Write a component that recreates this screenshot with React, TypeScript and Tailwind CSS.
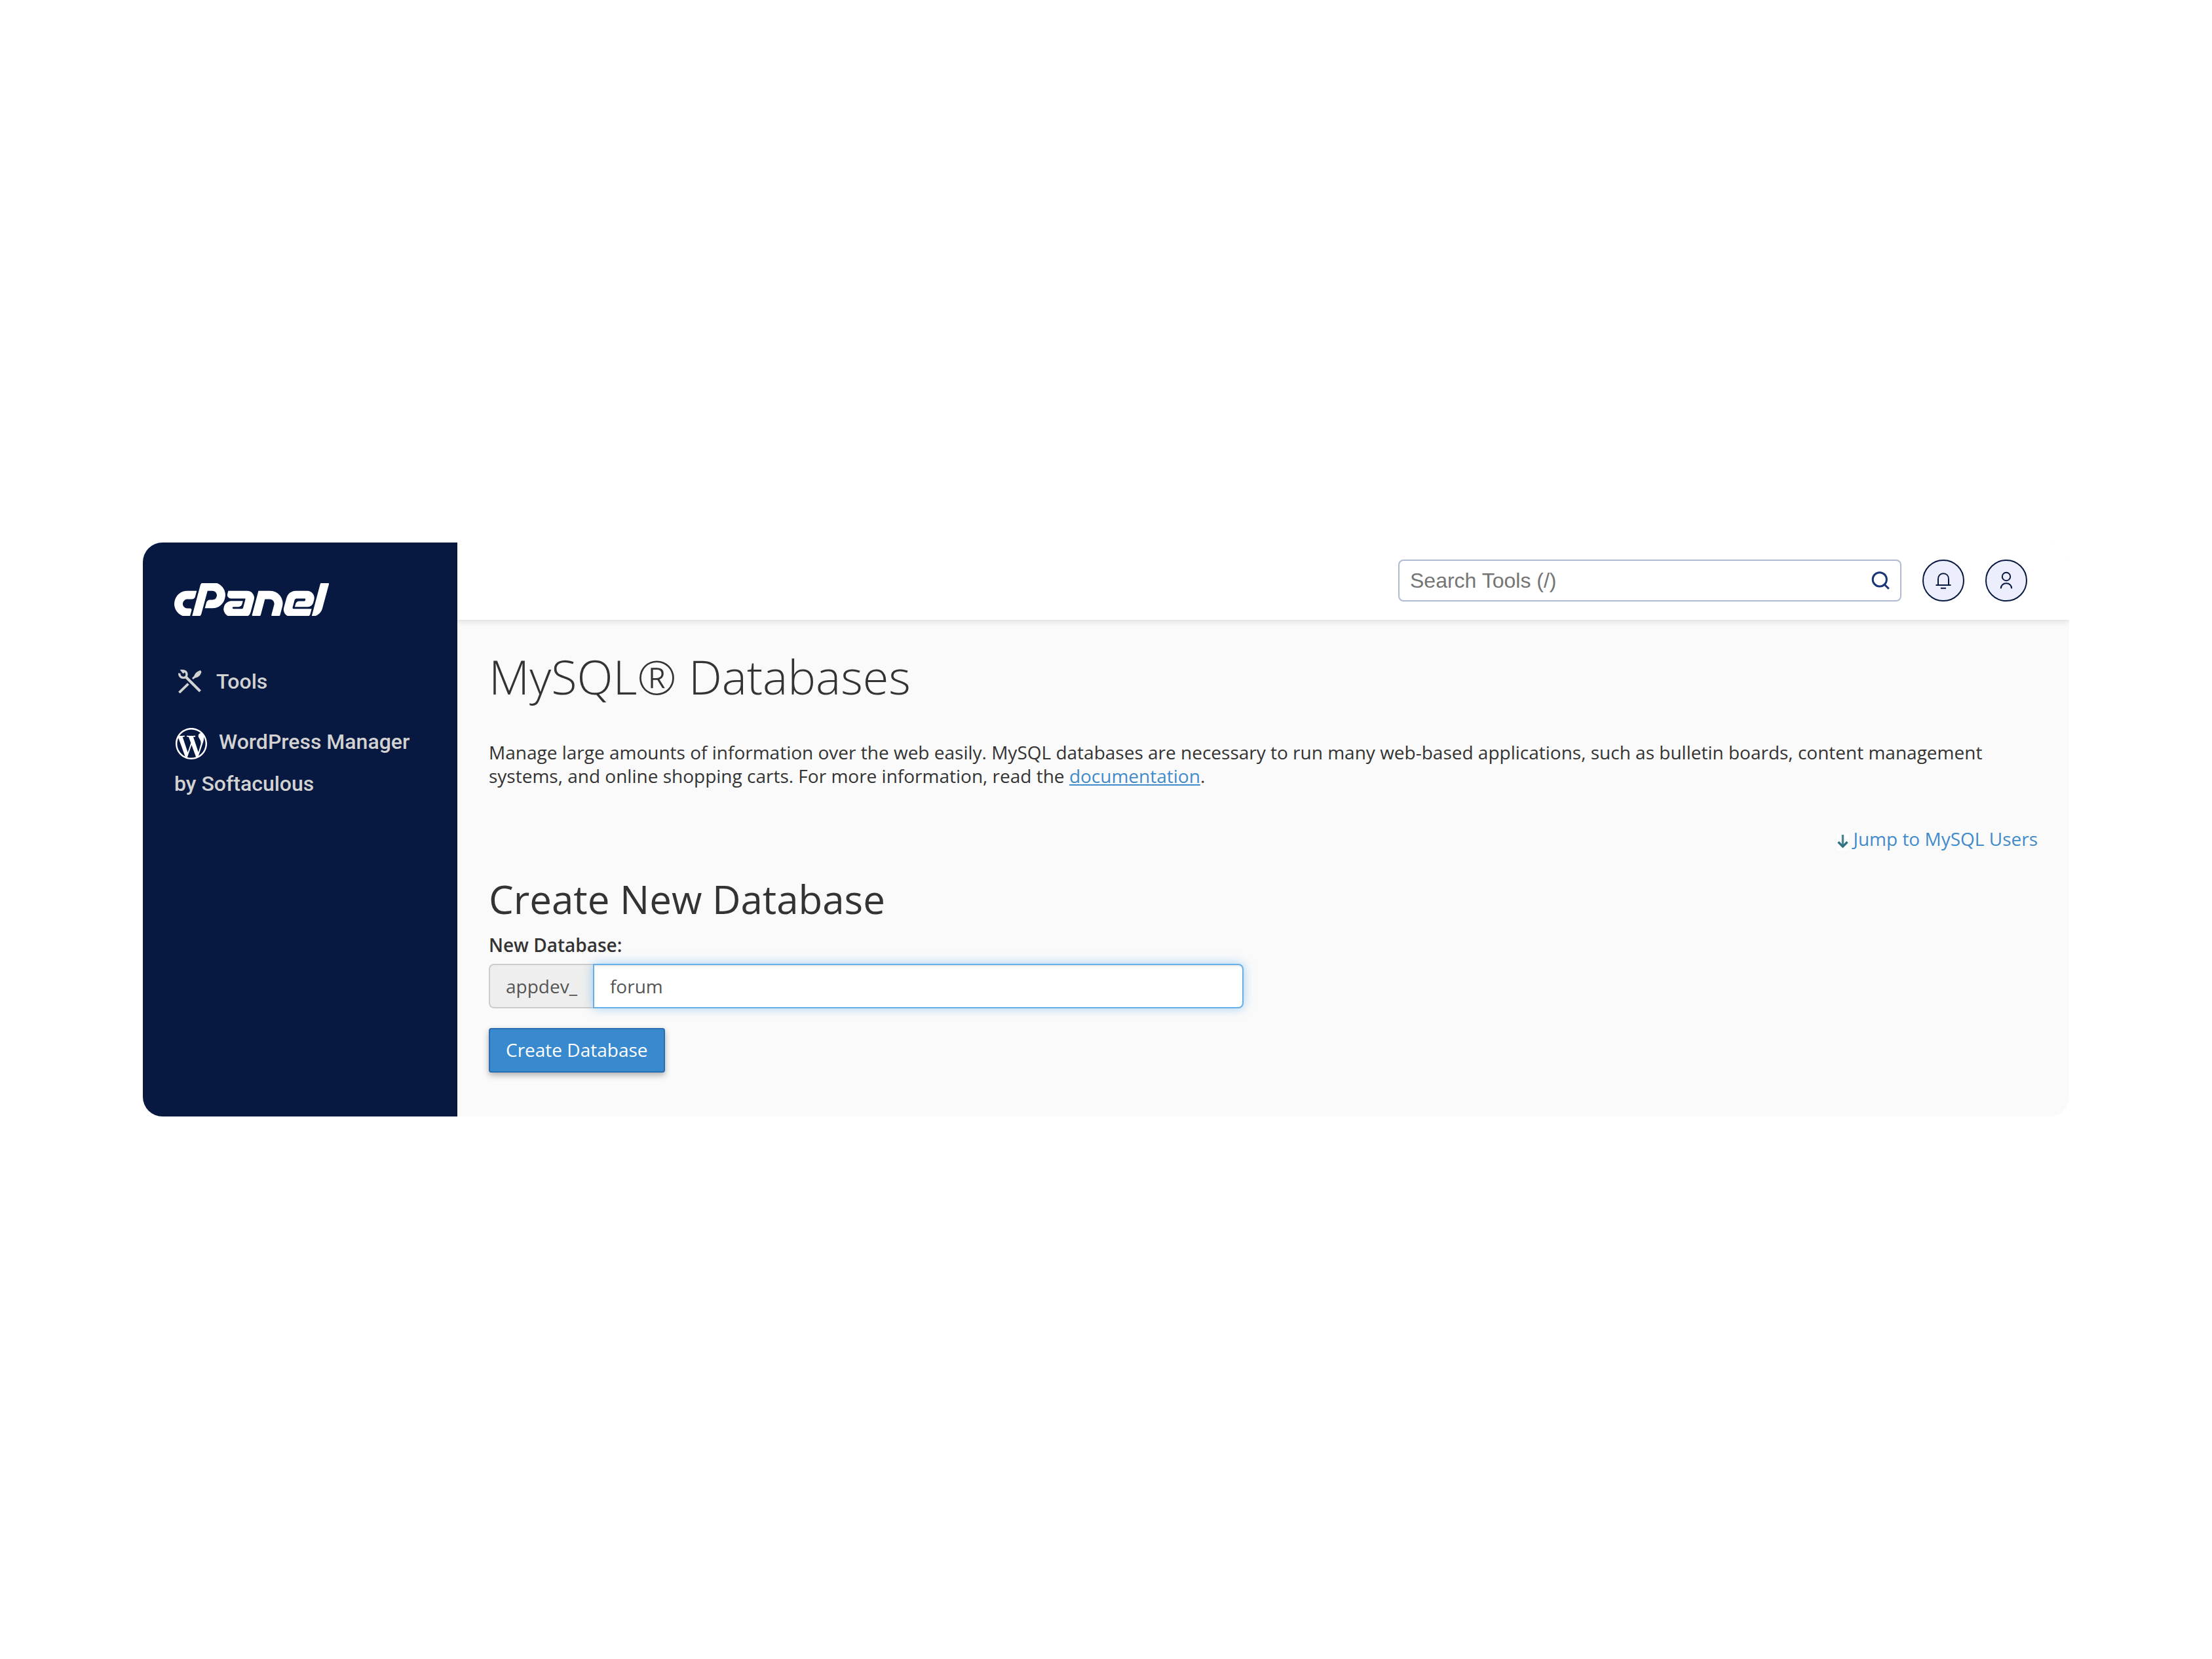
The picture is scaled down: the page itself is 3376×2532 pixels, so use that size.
import { SiCpanel, SiWordpress } from "react-icons/si";

function ToolsIcon() {
  return (
    <svg viewBox="0 0 36 36" className="h-9 w-9 shrink-0" fill="none" stroke="#d2d2d2" aria-hidden="true">
      <path d="M11.5 11 33.5 33" strokeWidth="4" />
      <path d="M1.8 5.5C1.4 9.6 4 12.4 7.6 12.4c3.400 0 5.400-2.200 5.400-5.200C13 4 10.400 1.500 6 1.800l2.800 3.400" strokeWidth="3.400" />
      <path d="M2.800 33.800 14 23" strokeWidth="3.800" strokeLinecap="square" />
      <path d="M22 14l4-4" strokeWidth="3" />
      <path d="M24 11.500C24.500 6.500 27.500 3.500 33.500 1c1 .8 1.800 1.600 2 2.800C33.500 9.500 30.500 12 25.500 12.800z" fill="#d2d2d2" stroke="none" />
    </svg>
  );
}

function SearchIcon() {
  return (
    <svg viewBox="0 0 28 28" className="h-7 w-7" fill="none" stroke="#1a3578" strokeWidth="3" aria-hidden="true">
      <circle cx="12.8" cy="12.4" r="10.6" />
      <path d="M20 20 26.800 26.600" />
    </svg>
  );
}

function BellIcon() {
  return (
    <svg viewBox="0 0 28 28" className="h-7 w-7" fill="none" stroke="#071940" strokeWidth="2" aria-hidden="true">
      <path d="M2.500 21H25.500M6 21V12C6 6.500 9.200 3.300 14 3.300s8 3.200 8 8.700v9M10 25.700h8" />
    </svg>
  );
}

function UserIcon() {
  return (
    <svg viewBox="0 0 28 28" className="h-7 w-7" fill="none" stroke="#071940" strokeWidth="2" aria-hidden="true">
      <circle cx="14" cy="8" r="6.2" />
      <path d="M5.800 26.200C5.800 21.500 9.200 18.300 14 18.300s8.200 3.200 8.200 7.900" />
    </svg>
  );
}

function ArrowDownIcon() {
  return (
    <svg viewBox="0 0 18 26" className="h-[26px] w-[18px] bg-white" fill="none" stroke="#2f7280" strokeWidth="3.4" aria-hidden="true">
      <path d="M8.500 2V20" opacity=".85" />
      <path d="M1.500 13 8.500 20 15.500 13" />
    </svg>
  );
}

export default function App() {
  return (
    <div className="flex min-h-screen items-center bg-white px-[218px] font-['Open_Sans',sans-serif] text-[28px] leading-9 text-[#333]">
      <div className="flex w-full overflow-hidden rounded-[30px] bg-[#fafafa]">
        <aside className="w-[480px] shrink-0 bg-[#071940] px-12 pt-[62px] font-['Roboto',sans-serif] text-[32px] font-medium leading-[64px] text-[#d2d2d2]">
          <a href="#home" aria-label="cPanel" className="flex h-[50px] w-[236px] items-center overflow-hidden text-white">
            <SiCpanel className="h-[236px] w-[236px] shrink-0" />
          </a>
          <nav className="mt-[68px]">
            <a href="#tools" className="flex items-center">
              <span className="flex w-16 pl-[6px]"><ToolsIcon /></span>
              Tools
            </a>
            <a href="#wordpress" className="mt-7 block">
              <SiWordpress className="ml-0.5 mr-[18px] inline h-12 w-12 text-white" />
              WordPress Manager by Softaculous
            </a>
          </nav>
        </aside>
        <div className="min-w-0 flex-1 overflow-hidden">
          <header className="flex h-[118px] items-center justify-end gap-8 bg-white pb-0.5 pr-16 shadow-[0_2px_10px_rgba(0,0,0,0.14)]">
            <div className="flex h-16 w-[768px] items-center rounded-lg border-2 border-[#b0bbd3] bg-white px-4">
              <input aria-label="Search Tools" placeholder="Search Tools (/)" className="min-w-0 flex-1 bg-transparent font-['Liberation_Sans',sans-serif] text-[32px] outline-none placeholder:text-[#757575]" />
              <button aria-label="Search"><SearchIcon /></button>
            </div>
            <button aria-label="Notifications" className="flex size-16 items-center justify-center rounded-full border-2 border-[#071940] bg-[#ecedfd]"><BellIcon /></button>
            <button aria-label="Account" className="flex size-16 items-center justify-center rounded-full border-2 border-[#071940] bg-[#ecedfd]"><UserIcon /></button>
          </header>
          <main className="px-12 pb-[67px] pt-[38px]">
            <h1 className="text-[72px] font-light leading-[96px]">MySQL® Databases</h1>
            <p className="mt-[50px]">
              Manage large amounts of information over the web easily. MySQL databases are necessary to run many web-based applications, such as bulletin boards, content management systems, and online shopping carts. For more information, read the{" "}
              <a href="#documentation" className="text-[#428bca] underline">documentation</a>.
            </p>
            <div className="mt-[60px] flex justify-end">
              <a href="#users" className="flex items-end gap-1.5 text-[#428bca]"><ArrowDownIcon />Jump to MySQL Users</a>
            </div>
            <h2 className="mt-[34px] text-[60px] leading-[80px]">Create New Database</h2>
            <form onSubmit={(e) => e.preventDefault()}>
              <label htmlFor="database" className="mt-3 block font-semibold">New Database:</label>
              <div className="mt-[11px] flex h-[68px] w-[calc(50%-30px)] text-[#555]">
                <span className="flex items-center rounded-l-lg border-2 border-r-0 border-[#ccc] bg-[#eee] px-6">appdev_</span>
                <input id="database" defaultValue="forum" className="min-w-0 flex-1 rounded-r-lg border-2 border-[#66afe9] bg-white px-6 shadow-[inset_0_2px_2px_rgba(0,0,0,0.075),0_0_16px_rgba(102,175,233,0.6)] outline-none" />
              </div>
              <button className="mt-[30px] block h-[68px] rounded border-2 border-[#2a6db0] bg-[#3889ce] px-6 pb-0.5 text-white shadow-[0_4px_10px_rgba(0,0,0,0.3)]">Create Database</button>
            </form>
          </main>
        </div>
      </div>
    </div>
  );
}
